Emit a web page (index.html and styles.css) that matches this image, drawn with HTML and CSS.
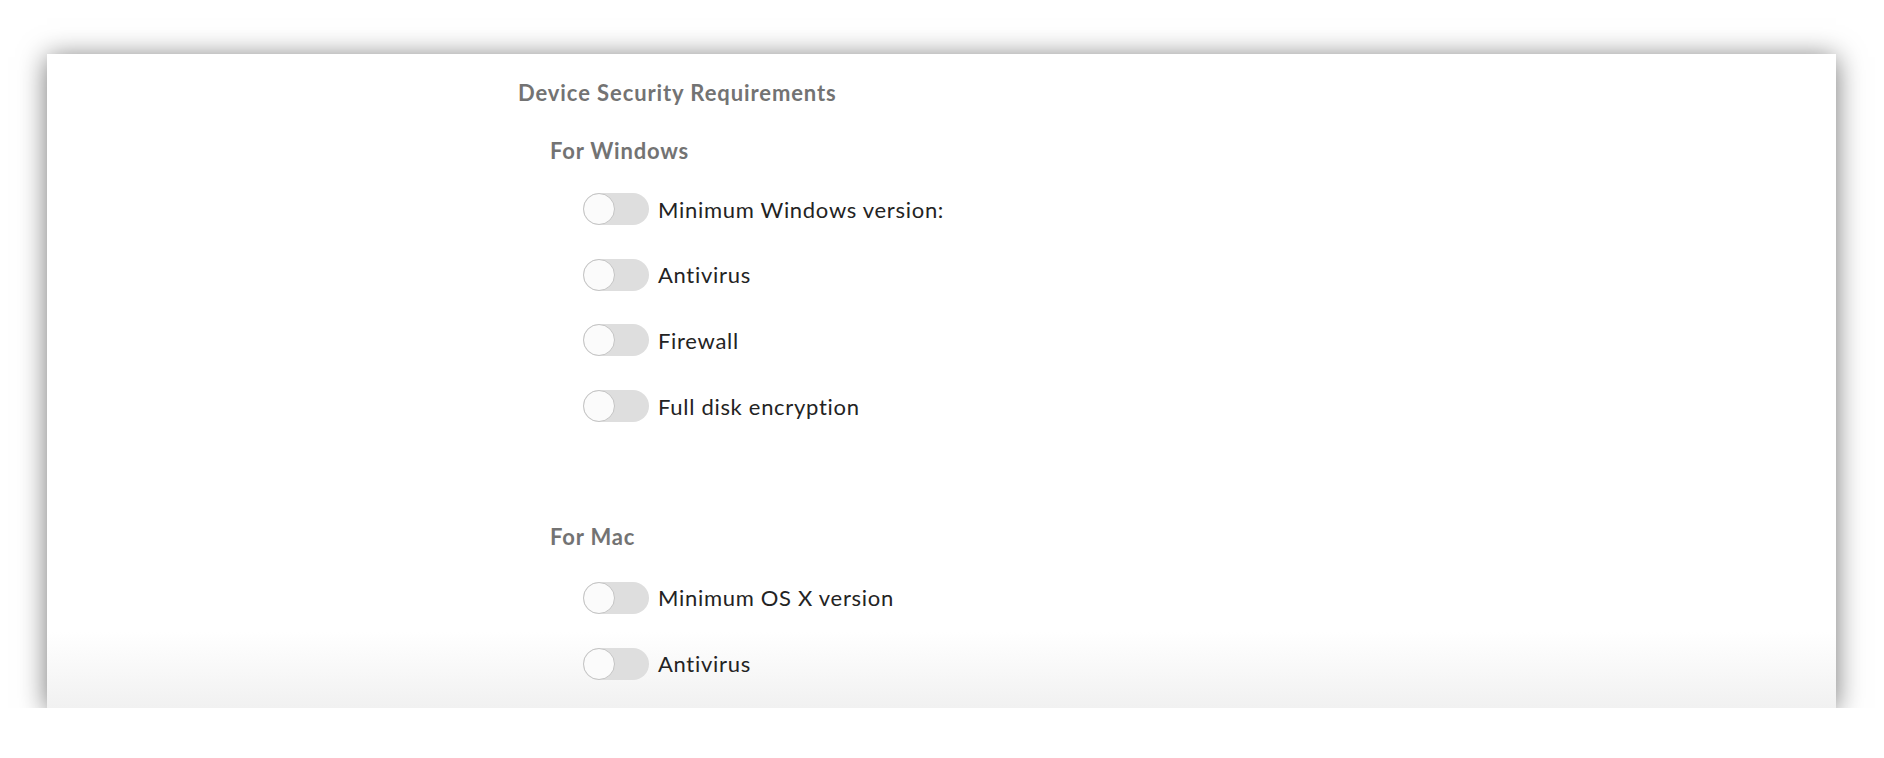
FILE: index.html
```html
<!DOCTYPE html>
<html lang="en">
<head>
    <meta charset="UTF-8">
    <meta name="viewport" content="width=device-width, initial-scale=1.0">
    <title>Device Security Requirements</title>
    <link rel="stylesheet" href="styles.css">
</head>
<body>
    <div class="card">
        <h2 class="title">Device Security Requirements</h2>

        <section class="platform">
            <h3>For Windows</h3>
            <div class="options">
                <label class="option"><span class="switch"><input type="checkbox"><span class="knob"></span></span>Minimum Windows version:</label>
                <label class="option"><span class="switch"><input type="checkbox"><span class="knob"></span></span>Antivirus</label>
                <label class="option"><span class="switch"><input type="checkbox"><span class="knob"></span></span>Firewall</label>
                <label class="option"><span class="switch"><input type="checkbox"><span class="knob"></span></span>Full disk encryption</label>
            </div>
        </section>

        <section class="platform mac">
            <h3>For Mac</h3>
            <div class="options">
                <label class="option"><span class="switch"><input type="checkbox"><span class="knob"></span></span>Minimum OS X version</label>
                <label class="option"><span class="switch"><input type="checkbox"><span class="knob"></span></span>Antivirus</label>
            </div>
        </section>
    </div>
</body>
</html>
```

FILE: styles.css
```css
:root {
    --heading: #737373;
    --text: #232323;
    --track: #dedede;
    --knob-border: #c4c4c4;
}

body {
    margin: 0;
    background: #fff;
    font-family: Lato, "Open Sans", sans-serif;
    overflow: hidden;
}

.card {
    box-sizing: border-box;
    width: 1789px;
    height: 654px;
    margin: 54px 0 0 47px;
    padding: 24px 0 0 471px;
    background: linear-gradient(to bottom, #fff 0, #fff 578px, #f1f1f1 100%);
    box-shadow: 0 3px 26px rgba(0, 0, 0, 0.55);
    overflow: hidden;
}

.title {
    margin: 0;
    font-size: 22px;
    line-height: 30px;
    font-weight: 700;
    letter-spacing: 0.9px;
    color: var(--heading);
}

.platform {
    margin-top: 28px;
    padding-left: 32px;
}

.platform.mac {
    margin-top: 100px;
}

.platform h3 {
    margin: 0;
    font-size: 22px;
    line-height: 30px;
    font-weight: 700;
    letter-spacing: 0.8px;
    color: var(--heading);
}

.options {
    display: flex;
    flex-direction: column;
    gap: 33.7px;
    margin-top: 27px;
    padding-left: 33px;
}

.mac .options {
    gap: 34px;
    margin-top: 29.5px;
}

.option {
    display: flex;
    align-items: center;
    gap: 9px;
    height: 32px;
    font-size: 22px;
    letter-spacing: 0.7px;
    color: var(--text);
    cursor: pointer;
}

.switch {
    position: relative;
    display: inline-block;
    width: 66px;
    height: 32px;
    border-radius: 16px;
    background: var(--track);
}

.switch input {
    display: none;
}

.knob {
    position: absolute;
    left: 0;
    top: 0;
    box-sizing: border-box;
    width: 32px;
    height: 32px;
    border-radius: 50%;
    background: #fbfbfb;
    border: 1.5px solid var(--knob-border);
}
```
